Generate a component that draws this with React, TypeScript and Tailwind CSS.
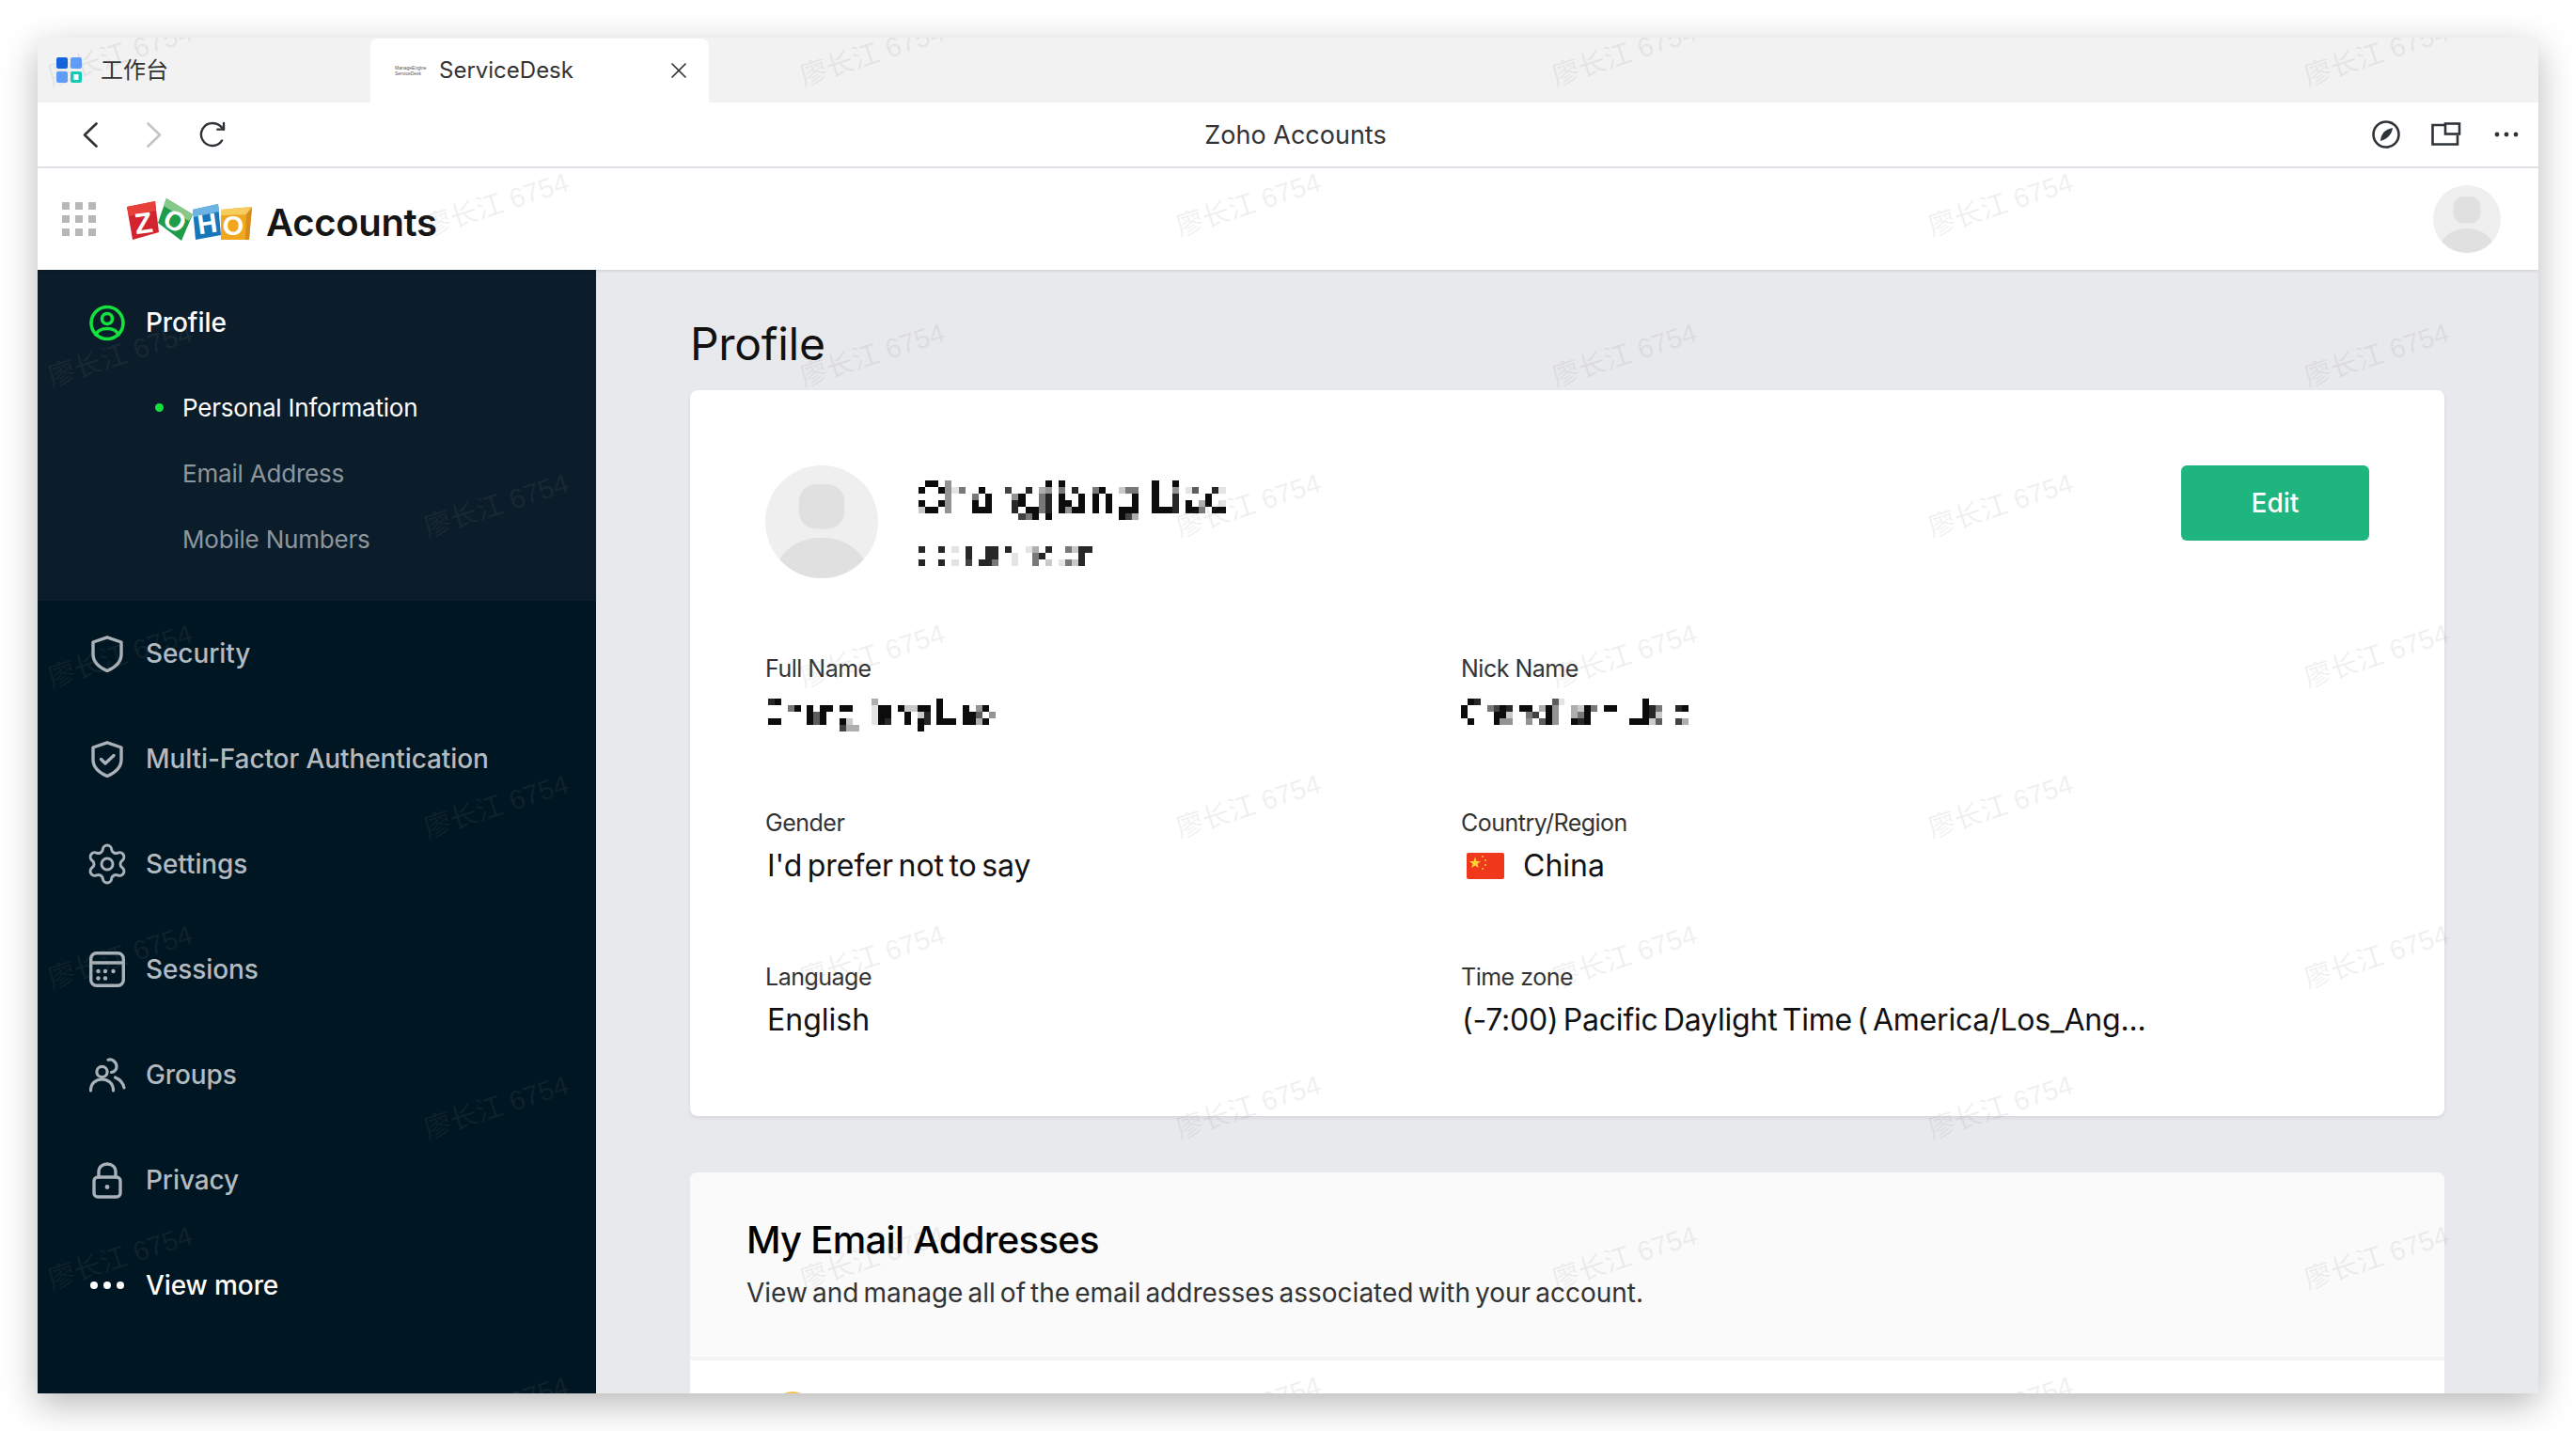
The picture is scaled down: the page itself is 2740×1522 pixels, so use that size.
import React from "react";
import { Settings, X } from "lucide-react";

type Run = [number, number, number];

function Mosaic({ rows, cols, className, cell = 7 }: { rows: Run[][]; cols: number; className?: string; cell?: number }) {
  const s = cell;
  return (
    <svg width={cols * s} height={rows.length * 7} viewBox={`0 0 ${cols * s} ${rows.length * 7}`} shapeRendering="crispEdges" className={className}>
      {rows.map((row, y) =>
        row.map(([c, len, d], i) => {
          const g = 255 - d * 27;
          return <rect key={`${y}-${i}`} x={c * s} y={y * 7} width={len * s} height={7} fill={`rgb(${g},${g},${g})`} />;
        })
      )}
    </svg>
  );
}

const nameRows: Run[][] = [
  [[1, 2, 9], [4, 1, 4], [19, 1, 9], [21, 1, 9], [35, 1, 9], [38, 1, 9]],
  [[0, 1, 9], [3, 1, 9], [4, 1, 4], [5, 1, 1], [6, 1, 5], [9, 1, 9], [13, 1, 7], [16, 1, 8], [18, 1, 3], [19, 1, 4], [21, 1, 5], [23, 1, 8], [26, 1, 5], [27, 1, 9], [30, 1, 2], [31, 2, 5], [35, 1, 9], [38, 1, 4], [40, 1, 1], [41, 1, 6], [44, 1, 8], [45, 1, 1]],
  [[4, 1, 4], [8, 1, 5], [10, 1, 9], [14, 1, 4], [15, 1, 9], [18, 1, 5], [19, 1, 8], [21, 1, 9], [24, 1, 9], [26, 1, 9], [28, 1, 9], [32, 1, 9], [35, 1, 9], [38, 1, 8], [43, 1, 9]],
  [[0, 1, 9], [3, 1, 9], [4, 1, 4], [8, 1, 9], [10, 1, 9], [14, 1, 8], [15, 1, 9], [18, 1, 5], [19, 1, 8], [21, 2, 9], [24, 1, 9], [26, 1, 9], [28, 1, 9], [32, 1, 9], [35, 1, 9], [38, 1, 8], [40, 1, 9], [42, 1, 3], [43, 1, 9], [45, 1, 1]],
  [[0, 1, 2], [1, 2, 9], [4, 1, 4], [8, 3, 9], [14, 1, 8], [16, 2, 9], [18, 1, 5], [19, 1, 8], [21, 1, 9], [22, 1, 4], [23, 2, 9], [26, 1, 9], [28, 1, 9], [30, 3, 9], [35, 3, 9], [38, 1, 8], [40, 2, 9], [42, 1, 5], [44, 2, 9]],
  [[15, 1, 7], [16, 1, 5], [17, 1, 9], [19, 1, 9], [30, 1, 9], [31, 1, 7], [32, 1, 3]],
];
const subRows: Run[][] = [
  [[0, 1, 8], [3, 1, 8], [5, 1, 1], [7, 1, 8], [10, 2, 8], [13, 1, 8], [16, 1, 1], [17, 1, 3], [19, 1, 8], [22, 1, 5], [23, 1, 2], [24, 2, 8]],
  [[7, 1, 8], [10, 2, 8], [14, 1, 1], [17, 1, 5], [18, 1, 8], [24, 1, 8]],
  [[0, 1, 8], [3, 1, 8], [5, 1, 1], [7, 1, 7], [9, 2, 8], [11, 1, 5], [14, 1, 1], [17, 1, 5], [19, 1, 2], [21, 1, 1], [22, 1, 5], [23, 1, 2], [24, 1, 8]],
];
const fullRows: Run[][] = [
  [[0, 1, 8], [1, 1, 9], [16, 1, 3], [26, 1, 9]],
  [[3, 1, 5], [4, 1, 9], [6, 1, 9], [8, 2, 9], [11, 2, 9], [16, 1, 1], [17, 2, 9], [20, 1, 9], [21, 2, 2], [23, 2, 9], [26, 1, 9], [30, 1, 9], [32, 1, 4], [33, 1, 9]],
  [[6, 1, 9], [7, 1, 6], [8, 1, 9], [16, 1, 1], [17, 2, 9], [21, 1, 9], [23, 1, 2], [24, 1, 8], [26, 1, 9], [30, 2, 9], [32, 1, 6], [34, 1, 4]],
  [[0, 2, 9], [6, 1, 9], [7, 1, 6], [8, 1, 9], [11, 1, 9], [12, 1, 2], [16, 1, 1], [17, 1, 9], [18, 1, 8], [21, 1, 9], [23, 1, 9], [24, 1, 8], [26, 3, 9], [30, 2, 9], [32, 1, 3], [33, 1, 9]],
  [[11, 1, 7], [12, 2, 3], [23, 1, 9]],
];
const nickRows: Run[][] = [
  [[1, 1, 9], [2, 1, 8], [14, 1, 6], [15, 1, 1], [28, 1, 9]],
  [[0, 1, 9], [4, 1, 5], [5, 1, 7], [6, 1, 9], [7, 1, 8], [9, 2, 9], [12, 1, 3], [13, 1, 9], [14, 1, 4], [17, 1, 3], [18, 1, 2], [19, 1, 9], [20, 1, 5], [22, 2, 9], [28, 1, 9], [29, 1, 8], [30, 1, 5], [33, 1, 8], [34, 1, 9]],
  [[0, 1, 9], [5, 2, 9], [7, 1, 2], [10, 1, 5], [11, 1, 7], [13, 1, 9], [14, 1, 4], [17, 1, 3], [18, 1, 5], [19, 1, 9], [28, 1, 9], [29, 1, 8], [30, 1, 2]],
  [[1, 1, 9], [5, 1, 9], [6, 2, 4], [10, 1, 4], [12, 1, 6], [13, 1, 9], [14, 1, 4], [17, 1, 9], [18, 1, 8], [19, 1, 9], [26, 3, 9], [29, 1, 2], [30, 1, 6], [33, 1, 7], [34, 1, 3]],
];

function Avatar({ size, id }: { size: number; id: string }) {
  return (
    <svg width={size} height={size} viewBox="0 0 72 72" className="shrink-0">
      <defs>
        <clipPath id={id}>
          <circle cx="36" cy="36" r="36" />
        </clipPath>
      </defs>
      <circle cx="36" cy="36" r="36" fill="#efefef" />
      <rect x="21.5" y="12" width="29" height="28.5" rx="11" fill="#e0e0e0" />
      <ellipse cx="36" cy="69" rx="29" ry="23" fill="#e0e0e0" clipPath={`url(#${id})`} />
    </svg>
  );
}

function ZohoLogo() {
  const letter = "font-['Liberation_Sans',sans-serif] font-bold";
  return (
    <svg width="134" height="46" viewBox="10 10 134 46" className="shrink-0">
      <polygon points="10,20 40,14 44,47 16,55" fill="#d2232f" />
      <polygon points="10,20 40,14 41,24 12,30" fill="#e8403a" />
      <polygon points="52,11 80,28 68,56 43,37" fill="#1f9c48" />
      <polygon points="52,11 80,28 76,35 49,19" fill="#86c98a" />
      <polygon points="80,23 107,17 110,50 83,55" fill="#1877bb" />
      <polygon points="80,23 107,17 108,25 81,31" fill="#6db3e4" />
      <polygon points="110,23 143,20 140,55 110,55" fill="#f0a61e" />
      <polygon points="110,23 143,20 142,28 110,29" fill="#f7cd5f" />
      <polygon points="137,28 143,20 140,55 136,55" fill="#d68c1c" />
      <text x="27.5" y="48" fontSize="31" fill="#fff" textAnchor="middle" transform="rotate(-8 27 37)" className={letter}>Z</text>
      <text x="61" y="45" fontSize="29" fill="#fff" textAnchor="middle" transform="rotate(30 61 35)" className={letter}>O</text>
      <text x="95.5" y="48" fontSize="29" fill="#fff" textAnchor="middle" transform="rotate(-8 95 38)" className={letter}>H</text>
      <text x="123" y="50" fontSize="29" fill="#fff" textAnchor="middle" className={letter}>O</text>
    </svg>
  );
}

const stroke = { fill: "none", stroke: "currentColor", strokeLinecap: "round", strokeLinejoin: "round" } as const;

function ProfileIcon() {
  return (
    <svg width="38" height="39" viewBox="0 0 38 39" {...stroke} strokeWidth="3.6" className="shrink-0 text-[#14e13d]">
      <circle cx="19" cy="19.5" r="17" />
      <circle cx="19" cy="15" r="5.5" />
      <path d="M7 32 C9 27 14 25.5 19 25.5 S29 27 31 32" />
    </svg>
  );
}
function ShieldIcon({ check }: { check?: boolean }) {
  return (
    <svg width="34" height="39" viewBox="0 0 34 39" {...stroke} strokeWidth="3.4" className="shrink-0">
      <path d="M17 1.8 L32 7 V20 C32 29 25 34 17 37.5 C9 34 2 29 2 20 V7 Z" />
      {check && <path d="M10.5 19.5 L15 24 L24 15.5" />}
    </svg>
  );
}
function SessionsIcon() {
  return (
    <svg width="38" height="38" viewBox="0 0 38 38" {...stroke} strokeWidth="3.4" className="shrink-0">
      <rect x="1.7" y="1.7" width="34.6" height="34.6" rx="6" />
      <path d="M2 12 H36" />
      <g fill="currentColor" stroke="none">
        <circle cx="9.5" cy="21" r="2.2" />
        <circle cx="17" cy="21" r="2.2" />
        <circle cx="25.5" cy="21" r="2.2" />
        <circle cx="9.5" cy="28.5" r="2.2" />
        <circle cx="17" cy="28.5" r="2.2" />
      </g>
    </svg>
  );
}
function GroupsIcon() {
  return (
    <svg width="40" height="38" viewBox="0 0 40 38" {...stroke} strokeWidth="3.2" className="shrink-0">
      <circle cx="14.5" cy="16" r="5.6" />
      <path d="M2.5 36 C2.5 28 8 24 14.5 24 S26.5 28 26.5 36" />
      <path d="M21 3.2 C26 2 30 6 30 10 C30 14 27.5 16 24.5 16.5" />
      <path d="M28.5 22 C33.5 24 37 28 38 33" />
    </svg>
  );
}
function LockIcon() {
  return (
    <svg width="32" height="39" viewBox="0 0 32 39" {...stroke} strokeWidth="3.4" className="shrink-0">
      <rect x="2" y="16" width="28" height="21" rx="4" />
      <path d="M7 16 V10.5 C7 5 11 2 16 2 S25 5 25 10.5 V16" />
      <circle cx="16" cy="26.5" r="2.4" fill="currentColor" stroke="none" />
    </svg>
  );
}

function NavRow({ icon, label, active }: { icon: React.ReactNode; label: string; active?: boolean }) {
  return (
    <div className={`flex h-[112px] items-center pl-[55px] ${active ? "text-white" : "text-[#a9b2b8]"}`}>
      <div className="flex w-[38px] shrink-0 items-center justify-center">{icon}</div>
      <span className={`ml-[22px] text-[28px] font-medium tracking-[-0.1px] ${active ? "text-white" : "text-[#b3bbc0]"}`}>{label}</span>
    </div>
  );
}

function Field({ label, children, className }: { label: string; children: React.ReactNode; className?: string }) {
  return (
    <div className={`h-[164px] ${className ?? ""}`}>
      <div className="flex h-[40px] items-center text-[25px] tracking-[-0.5px] text-[#333]">{label}</div>
      <div className="flex h-[50px] items-center text-[32px] text-[#111] [word-spacing:-3.6px]">{children}</div>
    </div>
  );
}

const marks: { x: number; y: number }[] = [];
for (let r = 0; r < 10; r++) {
  const odd = r % 2 === 1;
  const xs = odd ? [528, 1328, 2128] : [128, 928, 1728, 2528];
  xs.forEach((x) => marks.push({ x: x - 40, y: 58 + r * 160 - 40 }));
}

export default function App() {
  return (
    <div className="h-[1522px] w-[2740px] overflow-hidden bg-white p-10 font-[Inter,'Noto_Sans_CJK_SC',sans-serif]">
      <div className="relative flex h-[1442px] w-[2660px] flex-col overflow-hidden bg-white shadow-[0_12px_36px_rgba(0,0,0,0.28)]">
        {/* tab strip */}
        <div className="flex h-[69px] shrink-0 items-end bg-[#f2f2f2]">
          <div className="flex h-[69px] w-[354px] items-center pl-5">
            <svg width="27" height="27" viewBox="0 0 27 27">
              <rect x="0" y="0" width="12" height="12" rx="2" fill="#0f62e0" />
              <rect x="15" y="0" width="12" height="12" rx="2" fill="#5e9dfc" />
              <rect x="0" y="15" width="12" height="12" rx="2" fill="#5e9dfc" />
              <rect x="15" y="15" width="12" height="12" rx="2" fill="#10cbb5" />
              <rect x="18.5" y="18" width="5" height="6" fill="#fff" />
            </svg>
            <span className="ml-[20px] text-[24px] text-[#333]">工作台</span>
          </div>
          <div className="flex h-[68px] w-[360px] items-center rounded-t-[8px] bg-white pl-[26px]">
            <div className="flex w-[30px] flex-col items-start font-['Liberation_Sans',sans-serif] text-[5px] leading-[6px] text-[#555]">
              <span>ManageEngine</span>
              <span>ServiceDesk</span>
            </div>
            <span className="ml-[17px] text-[24px] text-[#333]">ServiceDesk</span>
            <X size={28} strokeWidth={1.5} className="ml-auto mr-[18px] text-[#333]" />
          </div>
        </div>
        {/* toolbar */}
        <div className="relative flex h-[70px] shrink-0 items-center border-b-2 border-[#e2e2e8] bg-white">
          <svg width="16" height="27" viewBox="0 0 16 27" fill="none" stroke="#2d3338" strokeWidth="2.6" strokeLinecap="round" strokeLinejoin="round" className="ml-[48px]">
            <path d="M14.5 1.5 L2 13.5 L14.5 25.5" />
          </svg>
          <svg width="16" height="27" viewBox="0 0 16 27" fill="none" stroke="#c4c4c4" strokeWidth="2.6" strokeLinecap="round" strokeLinejoin="round" className="ml-[52px]">
            <path d="M1.5 1.5 L14 13.5 L1.5 25.5" />
          </svg>
          <svg width="32" height="32" viewBox="0 0 24 24" fill="none" stroke="#2d3338" strokeWidth="1.8" strokeLinecap="round" strokeLinejoin="round" className="ml-[38px]">
            <path d="M19.6 16.8 A9 9 0 1 1 12 3 c2.52 0 4.93 1 6.74 2.74 L21 8" />
            <path d="M21 3 v5 h-5" />
          </svg>
          <div className="absolute left-0 top-0 flex h-full w-full items-center justify-center pl-[16px] pt-[2px] text-[27px] text-[#333]">Zoho Accounts</div>
          <div className="ml-auto flex items-center text-[#2d3338]">
            <svg width="30" height="30" viewBox="0 0 30 30">
              <circle cx="15" cy="15" r="13.5" fill="none" stroke="currentColor" strokeWidth="2.6" />
              <path d="M22 8 C21 14 18 19 9 22 C9.5 15 13 10 22 8 Z" fill="currentColor" />
            </svg>
            <svg width="32" height="26" viewBox="0 0 32 26" className="ml-[33px]" fill="none" stroke="currentColor" strokeWidth="2.6">
              <path d="M15 3 H1.5 V23.5 H28 V14" />
              <rect x="15" y="1.5" width="15" height="11" />
            </svg>
            <svg width="26" height="8" viewBox="0 0 26 8" className="ml-[35px] mr-[21px]" fill="currentColor">
              <circle cx="3" cy="4" r="2.4" />
              <circle cx="13" cy="4" r="2.4" />
              <circle cx="23" cy="4" r="2.4" />
            </svg>
          </div>
        </div>
        {/* app header */}
        <div className="z-10 flex h-[108px] shrink-0 items-center bg-white pr-10 shadow-[0_1px_3px_rgba(0,0,0,0.12)]">
          <div className="ml-[26px] grid h-[36px] w-[36px] grid-cols-[8px_8px_8px] content-between justify-between">
            {Array.from({ length: 9 }).map((_, i) => (
              <span key={i} className="h-[8px] w-[8px] bg-[#b7b7b7]" />
            ))}
          </div>
          <div className="ml-[33px]">
            <ZohoLogo />
          </div>
          <span className="ml-[14px] mt-[8px] text-[40px] font-semibold leading-none tracking-[-0.3px] text-[#151515]">Accounts</span>
          <div className="ml-auto">
            <Avatar size={72} id="a1" />
          </div>
        </div>
        {/* body */}
        <div className="flex min-h-0 flex-1">
          <aside className="w-[594px] shrink-0 bg-[#001622]">
            <div className="h-[352px] bg-[#0b1d2a]">
              <NavRow icon={<ProfileIcon />} label="Profile" active />
              <div className="relative flex h-[70px] items-center pb-[2px] pl-[154px] text-[26px] tracking-[-0.2px] text-white">
                <span className="absolute left-[125px] h-[9px] w-[9px] rounded-full bg-[#14e13d]" />
                Personal Information
              </div>
              <div className="flex h-[70px] items-center pb-[2px] pl-[154px] text-[26px] tracking-[-0.2px] text-[#8d969c]">Email Address</div>
              <div className="flex h-[70px] items-center pb-[2px] pl-[154px] text-[26px] tracking-[-0.2px] text-[#8d969c]">Mobile Numbers</div>
            </div>
            <NavRow icon={<ShieldIcon />} label="Security" />
            <NavRow icon={<ShieldIcon check />} label="Multi-Factor Authentication" />
            <NavRow icon={<Settings size={48} strokeWidth={1.5} className="shrink-0" />} label="Settings" />
            <NavRow icon={<SessionsIcon />} label="Sessions" />
            <NavRow icon={<GroupsIcon />} label="Groups" />
            <NavRow icon={<LockIcon />} label="Privacy" />
            <NavRow
              active
              icon={
                <svg width="36" height="10" viewBox="0 0 36 10" fill="currentColor" className="shrink-0">
                  <circle cx="4" cy="5" r="4" />
                  <circle cx="18" cy="5" r="4" />
                  <circle cx="32" cy="5" r="4" />
                </svg>
              }
              label="View more"
            />
          </aside>
          <main className="min-w-0 flex-1 overflow-hidden bg-[#e8e9ed] px-[100px]">
            <h1 className="pb-[19px] pt-[49px] text-[48px] font-normal leading-[60px] tracking-[-0.3px] text-[#111]">Profile</h1>
            <section className="h-[772px] rounded-[8px] bg-white px-[80px] pt-[80px] shadow-[0_2px_4px_rgba(0,0,0,0.08)]">
              <div className="flex h-[120px]">
                <Avatar size={120} id="a2" />
                <div className="ml-[43px] pt-[16px]">
                  <Mosaic rows={nameRows} cols={47} cell={7.1} className="block" />
                  <Mosaic rows={subRows} cols={26} cell={7.1} className="mt-[28px] block" />
                </div>
                <button className="ml-auto h-[80px] w-[200px] rounded-[6px] bg-[#1eb67e] text-[28px] font-medium text-white">Edit</button>
              </div>
              <div className="mt-[77px] grid grid-cols-[740px_1fr]">
                <Field label="Full Name">
                  <Mosaic rows={fullRows} cols={35} cell={6.9} className="ml-[3px] mt-[7px]" />
                </Field>
                <Field label="Nick Name">
                  <Mosaic rows={nickRows} cols={35} cell={6.9} />
                </Field>
                <Field label="Gender">
                  <span className="ml-[2px]">I'd prefer not to say</span>
                </Field>
                <Field label="Country/Region">
                  <svg width="40" height="28" viewBox="0 0 40 28" className="ml-[6px] shrink-0">
                    <rect width="40" height="28" rx="2" fill="#f0381c" />
                    <polygon points="9,4.5 10.6,9 15,9 11.5,11.7 12.8,16 9,13.4 5.2,16 6.5,11.7 3,9 7.4,9" fill="#fbd334" />
                    <circle cx="17" cy="4" r="1" fill="#fbd334" />
                    <circle cx="20" cy="8" r="1" fill="#fbd334" />
                    <circle cx="20" cy="13" r="1" fill="#fbd334" />
                    <circle cx="17" cy="17" r="1" fill="#fbd334" />
                  </svg>
                  <span className="ml-[20px]">China</span>
                </Field>
                <Field label="Language">
                  <span className="ml-[2px]">English</span>
                </Field>
                <Field label="Time zone">
                  <span className="ml-px tracking-[-0.2px]">(-7:00) Pacific Daylight Time ( America/Los_Ang...</span>
                </Field>
              </div>
            </section>
            <section className="mt-[60px] h-[400px] overflow-hidden rounded-t-[8px] bg-white">
              <div className="h-[200px] border-b-4 border-[#f3f3f3] bg-[#fafafa] pl-[60px] pt-[47px]">
                <h2 className="text-[40px] font-medium leading-[50px] tracking-[-0.7px] text-black">My Email Addresses</h2>
                <p className="mt-[11px] text-[28px] leading-[40px] text-[#333] [word-spacing:-2.8px]">View and manage all of the email addresses associated with your account.</p>
              </div>
              <div className="ml-[89px] mt-[33px] h-[40px] w-[40px] rounded-full bg-[#f5c04a]" />
            </section>
          </main>
        </div>
        {/* watermark layer */}
        <div className="pointer-events-none absolute inset-0 z-20 overflow-hidden">
          {marks.map((m, i) => (
            <span
              key={i}
              className="absolute -translate-x-1/2 -translate-y-1/2 -rotate-[18deg] whitespace-nowrap font-['Liberation_Sans','Noto_Sans_CJK_SC',sans-serif] text-[29px] text-[#80808020]"
              style={{ left: m.x, top: m.y }}
            >
              廖长江 6754
            </span>
          ))}
        </div>
      </div>
    </div>
  );
}
